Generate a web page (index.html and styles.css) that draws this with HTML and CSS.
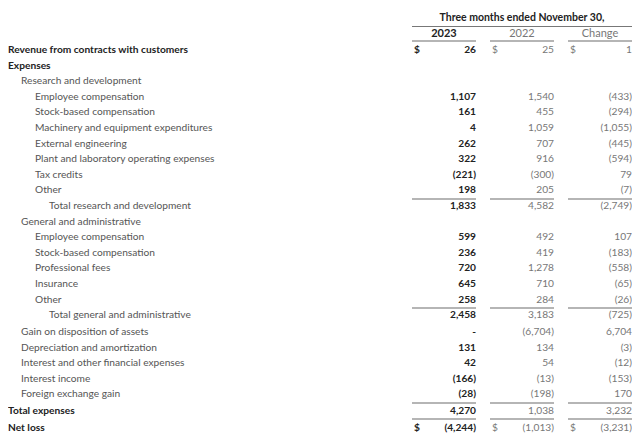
FILE: index.html
```html
<!DOCTYPE html>
<html lang="en">
<head>
<meta charset="UTF-8">
<meta name="viewport" content="width=device-width, initial-scale=1.0">
<title>Statement of Operations</title>
<link rel="stylesheet" href="styles.css">
</head>
<body>
<div class="statement">
  <div class="row period-row">
    <span></span>
    <span class="period">Three months ended November 30,</span>
  </div>
  <div class="row years">
    <span></span>
    <span class="year cur">2023</span>
    <span class="year">2022</span>
    <span class="year">Change</span>
  </div>

  <div class="row strong">
    <span class="label">Revenue from contracts with customers</span>
    <span class="num cur"><i>$</i>26</span>
    <span class="num"><i>$</i>25</span>
    <span class="num"><i>$</i>1</span>
  </div>
  <div class="row strong">
    <span class="label">Expenses</span>
    <span></span><span></span><span></span>
  </div>
  <div class="row">
    <span class="label l1">Research and development</span>
    <span></span><span></span><span></span>
  </div>
  <div class="row">
    <span class="label l2">Employee compensation</span>
    <span class="num cur">1,107</span>
    <span class="num">1,540</span>
    <span class="num">(433)</span>
  </div>
  <div class="row">
    <span class="label l2">Stock-based compensation</span>
    <span class="num cur">161</span>
    <span class="num">455</span>
    <span class="num">(294)</span>
  </div>
  <div class="row">
    <span class="label l2">Machinery and equipment expenditures</span>
    <span class="num cur">4</span>
    <span class="num">1,059</span>
    <span class="num">(1,055)</span>
  </div>
  <div class="row">
    <span class="label l2">External engineering</span>
    <span class="num cur">262</span>
    <span class="num">707</span>
    <span class="num">(445)</span>
  </div>
  <div class="row">
    <span class="label l2">Plant and laboratory operating expenses</span>
    <span class="num cur">322</span>
    <span class="num">916</span>
    <span class="num">(594)</span>
  </div>
  <div class="row">
    <span class="label l2">Tax credits</span>
    <span class="num cur">(221)</span>
    <span class="num">(300)</span>
    <span class="num">79</span>
  </div>
  <div class="row ruled">
    <span class="label l2">Other</span>
    <span class="num cur">198</span>
    <span class="num">205</span>
    <span class="num">(7)</span>
  </div>
  <div class="row">
    <span class="label l3">Total research and development</span>
    <span class="num cur">1,833</span>
    <span class="num">4,582</span>
    <span class="num">(2,749)</span>
  </div>
  <div class="row">
    <span class="label l1">General and administrative</span>
    <span></span><span></span><span></span>
  </div>
  <div class="row">
    <span class="label l2">Employee compensation</span>
    <span class="num cur">599</span>
    <span class="num">492</span>
    <span class="num">107</span>
  </div>
  <div class="row">
    <span class="label l2">Stock-based compensation</span>
    <span class="num cur">236</span>
    <span class="num">419</span>
    <span class="num">(183)</span>
  </div>
  <div class="row">
    <span class="label l2">Professional fees</span>
    <span class="num cur">720</span>
    <span class="num">1,278</span>
    <span class="num">(558)</span>
  </div>
  <div class="row">
    <span class="label l2">Insurance</span>
    <span class="num cur">645</span>
    <span class="num">710</span>
    <span class="num">(65)</span>
  </div>
  <div class="row ruled">
    <span class="label l2">Other</span>
    <span class="num cur">258</span>
    <span class="num">284</span>
    <span class="num">(26)</span>
  </div>
  <div class="row subtotal">
    <span class="label l3">Total general and administrative</span>
    <span class="num cur">2,458</span>
    <span class="num">3,183</span>
    <span class="num">(725)</span>
  </div>
  <div class="row">
    <span class="label l1">Gain on disposition of assets</span>
    <span class="num cur">-</span>
    <span class="num">(6,704)</span>
    <span class="num">6,704</span>
  </div>
  <div class="row">
    <span class="label l1">Depreciation and amortization</span>
    <span class="num cur">131</span>
    <span class="num">134</span>
    <span class="num">(3)</span>
  </div>
  <div class="row">
    <span class="label l1">Interest and other financial expenses</span>
    <span class="num cur">42</span>
    <span class="num">54</span>
    <span class="num">(12)</span>
  </div>
  <div class="row">
    <span class="label l1">Interest income</span>
    <span class="num cur">(166)</span>
    <span class="num">(13)</span>
    <span class="num">(153)</span>
  </div>
  <div class="row ruled">
    <span class="label l1">Foreign exchange gain</span>
    <span class="num cur">(28)</span>
    <span class="num">(198)</span>
    <span class="num">170</span>
  </div>
  <div class="row strong ruled total">
    <span class="label">Total expenses</span>
    <span class="num cur">4,270</span>
    <span class="num">1,038</span>
    <span class="num">3,232</span>
  </div>
  <div class="row strong ruled total">
    <span class="label">Net loss</span>
    <span class="num cur"><i>$</i>(4,244)</span>
    <span class="num"><i>$</i>(1,013)</span>
    <span class="num"><i>$</i>(3,231)</span>
  </div>
</div>
</body>
</html>
```

FILE: styles.css
```css
body {
  margin: 8px;
  font-family: Lato, "Open Sans", sans-serif;
  font-size: 10.2px;
  color: #555;
  background-color: #fff;
}

.row {
  display: grid;
  grid-template-columns: 1fr 64px 64px 64px;
  column-gap: 14px;
  height: 15.6px;
  line-height: 15.6px;
}

.period-row {
  height: 18px;
  line-height: 18px;
}

.period {
  grid-column: 2 / 5;
  text-align: center;
  font-size: 10.5px;
  font-weight: bold;
  color: #222;
  border-bottom: 1px solid #777;
}

.years {
  height: 16px;
  line-height: 14px;
}

.year {
  text-align: center;
  font-size: 11px;
  color: #777;
  border-bottom: 2px solid #b5b5b5;
}

.year.cur {
  font-weight: bold;
  color: #222;
}

.label {
  white-space: nowrap;
}

.l1 {
  padding-left: 13px;
}

.l2 {
  padding-left: 27px;
}

.l3 {
  padding-left: 41px;
}

.strong .label {
  font-weight: bold;
  color: #222;
}

.num {
  display: flex;
  justify-content: flex-end;
  text-align: right;
  color: #777;
}

.num i {
  font-style: normal;
  margin-right: auto;
  padding-left: 2px;
}

.num.cur {
  font-weight: bold;
  color: #222;
}

.ruled .num {
  border-bottom: 2px solid #b5b5b5;
}

.subtotal {
  height: 17px;
}

.total {
  height: 16.5px;
  line-height: 16px;
}
```
